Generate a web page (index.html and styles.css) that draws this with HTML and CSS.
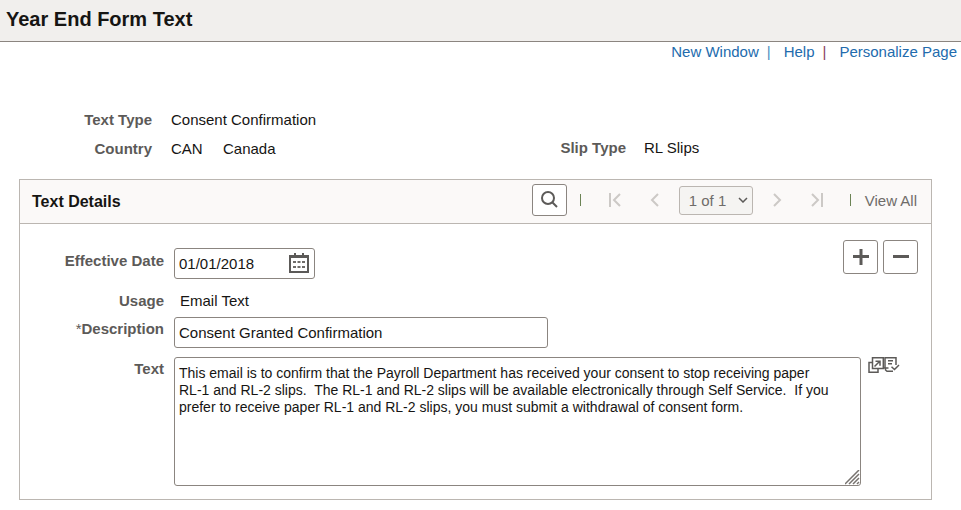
FILE: index.html
```
<!DOCTYPE html>
<html lang="en">
  <head>
    <meta charset="UTF-8" />
    <meta name="viewport" content="width=device-width, initial-scale=1.0" />
    <title>Year End Form Text</title>
    <link rel="stylesheet" href="styles.css">
  </head>
  <body>
    <header class="page-header">
      <h1>Year End Form Text</h1>
    </header>
    <nav class="page-links">
      <a href="#">New Window</a>
      <span class="bar">|</span>
      <a href="#">Help</a>
      <span class="bar bar-dark">|</span>
      <a href="#">Personalize Page</a>
    </nav>

    <main>
      <div class="summary">
        <dl class="summary-list">
          <dt>Text Type</dt>
          <dd>Consent Confirmation</dd>
          <dt>Country</dt>
          <dd><span class="code">CAN</span>Canada</dd>
        </dl>
        <dl class="summary-list slip">
          <dt>Slip Type</dt>
          <dd>RL Slips</dd>
        </dl>
      </div>

      <section class="panel">
        <div class="panel-header">
          <h2>Text Details</h2>
          <div class="pager">
            <button type="button" class="icon-button search" aria-label="Find">
              <svg width="20" height="20" viewBox="0 0 20 20">
                <circle cx="9" cy="8" r="6" />
                <path d="M13 12L18 17" />
              </svg>
            </button>
            <span class="divider"></span>
            <button type="button" class="nav-button" disabled aria-label="First">
              <svg width="12" height="14" viewBox="0 0 12 14">
                <path d="M1 0V14M11 1L5 7L11 13" />
              </svg>
            </button>
            <button type="button" class="nav-button" disabled aria-label="Previous">
              <svg width="12" height="14" viewBox="0 0 12 14">
                <path d="M9 1L3 7L9 13" />
              </svg>
            </button>
            <select class="row-select" aria-label="Row">
              <option>1 of 1</option>
            </select>
            <button type="button" class="nav-button" disabled aria-label="Next">
              <svg width="12" height="14" viewBox="0 0 12 14">
                <path d="M3 1L9 7L3 13" />
              </svg>
            </button>
            <button type="button" class="nav-button" disabled aria-label="Last">
              <svg width="12" height="14" viewBox="0 0 12 14">
                <path d="M1 1L7 7L1 13M11 0V14" />
              </svg>
            </button>
            <span class="divider"></span>
            <button type="button" class="view-all">View All</button>
          </div>
        </div>

        <form class="panel-body">
          <label for="effective-date">Effective Date</label>
          <div class="field date-row">
            <div class="date-box">
              <input type="text" id="effective-date" value="01/01/2018" />
              <button type="button" class="calendar" aria-label="Choose a date">
                <svg width="20" height="20" viewBox="0 0 20 20">
                  <path d="M0 2H20V20H0ZM2 5V18H18V5Z" fill="#5c5a58" fill-rule="evenodd" />
                  <path d="M5 0H7V4H5ZM13 0H15V4H13Z" fill="#5c5a58" />
                  <path d="M4 9H16M4 14H16" stroke="#6f6c69" stroke-width="2" stroke-dasharray="3 1.5" />
                </svg>
              </button>
            </div>
            <div class="row-actions">
              <button type="button" class="icon-button" aria-label="Add a row">
                <svg width="16" height="16" viewBox="0 0 16 16">
                  <path d="M0 7.5H16M8 0V16" />
                </svg>
              </button>
              <button type="button" class="icon-button" aria-label="Delete row">
                <svg width="16" height="16" viewBox="0 0 16 16">
                  <path d="M0 7.5H16" />
                </svg>
              </button>
            </div>
          </div>

          <span class="label">Usage</span>
          <span class="usage">Email Text</span>

          <label for="description"><span class="required">*</span>Description</label>
          <div class="field">
            <input type="text" id="description" class="description" value="Consent Granted Confirmation" />
          </div>

          <label for="text">Text</label>
          <div class="field text-row">
            <textarea id="text">This email is to confirm that the Payroll Department has received your consent to stop receiving paper RL-1 and RL-2 slips.  The RL-1 and RL-2 slips will be available electronically through Self Service.  If you prefer to receive paper RL-1 and RL-2 slips, you must submit a withdrawal of consent form.</textarea>
            <div class="text-tools">
              <button type="button" aria-label="Open in a window">
                <svg width="16" height="17" viewBox="0 0 16 17">
                  <path d="M4.5 0.8H15.3V11.5H4.5ZM4 5.5H1V15.2H10V12" />
                  <path d="M6.5 9.5L11.5 4.5M7.5 4.2H12V8.7" />
                </svg>
              </button>
              <button type="button" aria-label="Spell check">
                <svg width="16" height="17" viewBox="0 0 16 17">
                  <path d="M1 10.5V0.8H12V8M4 3.8H9M4 6.8H8M0 11H4.5M1.5 11V13L3 14.3H9" />
                  <path d="M7.5 9.7L10.5 12.5L15 8" />
                </svg>
              </button>
            </div>
          </div>
        </form>
      </section>
    </main>
  </body>
</html>
```
FILE: styles.css
```
* {
  box-sizing: border-box;
}
body {
  margin: 0;
  background: #fff;
  color: #161513;
  font-family: "Liberation Sans", Arial, sans-serif;
  font-size: 15px;
  line-height: 17px;
}
h1,
h2,
dl,
dd {
  margin: 0;
}
button {
  padding: 0;
  border: none;
  background: none;
  font: inherit;
  cursor: pointer;
}
svg {
  display: block;
  fill: none;
}
.page-header {
  padding: 7px 6px 10px;
  background: #f1efed;
  border-bottom: 1px solid #8b8580;
}
.page-header h1 {
  font-size: 20px;
  line-height: 24px;
}
.page-links {
  display: flex;
  justify-content: flex-end;
  padding: 1px 4px 0 0;
}
.page-links a {
  color: #226bad;
  text-decoration: none;
}
.page-links a:hover {
  text-decoration: underline;
}
.bar {
  padding: 0 13px 0 8px;
  color: #4a8fbf;
}
.bar-dark {
  color: #8a4060;
}
main {
  padding: 51px 29px 10px 19px;
}
.summary {
  display: grid;
  grid-template-columns: 474px 1fr;
  align-items: end;
}
.summary-list {
  display: grid;
  grid-template-columns: 133px 1fr;
  gap: 12px 19px;
}
.slip {
  padding-bottom: 1px;
  column-gap: 18px;
}
dt,
label,
.label {
  color: #5c5a58;
  font-weight: bold;
  text-align: right;
}
.code {
  display: inline-block;
  width: 52px;
}
.panel {
  margin-top: 22px;
  border: 1px solid #bbb6b1;
}
.panel-header {
  display: flex;
  align-items: center;
  justify-content: space-between;
  padding: 4px 14px 7px 12px;
  background: #fbf9f8;
  border-bottom: 1px solid #bbb6b1;
}
.panel-header h2 {
  padding-top: 3px;
  font-size: 16px;
  line-height: 20px;
}
.pager {
  display: flex;
  align-items: center;
}
.icon-button {
  display: flex;
  align-items: center;
  justify-content: center;
  width: 35px;
  height: 34px;
  background: #fff;
  border: 1px solid #8b8580;
  border-radius: 3px;
}
.icon-button svg {
  stroke: #5c5a58;
  stroke-width: 3;
}
.search {
  height: 32px;
}
.search svg {
  stroke-width: 2;
}
.divider {
  width: 1px;
  height: 12px;
  margin: 0 14px 0 13px;
  background: #6b8355;
}
.nav-button {
  display: flex;
  justify-content: center;
  width: 40px;
}
.nav-button svg {
  stroke: #ccc9c6;
  stroke-width: 2;
}
.row-select {
  appearance: none;
  width: 74px;
  height: 29px;
  margin: 0 4px;
  padding: 0 9px;
  background: #f5f4f2 url("data:image/svg+xml,%3Csvg xmlns='http://www.w3.org/2000/svg' width='10' height='6'%3E%3Cpath d='M1 1L5 5L9 1' fill='none' stroke='%235c5a58' stroke-width='1.5'/%3E%3C/svg%3E") no-repeat right 4px center;
  border: 1px solid #bbb6b1;
  border-radius: 3px;
  color: #6f6c69;
  font: inherit;
}
.view-all {
  color: #6f6c69;
}
.panel-body {
  display: grid;
  grid-template-columns: 144px 1fr;
  column-gap: 10px;
  padding: 16px 13px 13px 0;
}
.panel-body label {
  padding-top: 3px;
}
.panel-body label:first-child {
  padding-top: 12px;
}
.panel-body input,
textarea {
  color: #161513;
  font: inherit;
  border: 1px solid #8b8580;
  border-radius: 3px;
}
.field {
  display: flex;
}
.date-row {
  justify-content: space-between;
}
.date-box {
  display: flex;
  align-items: center;
  width: 141px;
  height: 31px;
  margin: 8px 0 13px;
  padding: 0 5px 1px 0;
  border: 1px solid #8b8580;
  border-radius: 3px;
}
.panel-body .date-box input {
  flex: 1;
  min-width: 0;
  padding: 0 4px;
  border: none;
  outline: none;
}
.row-actions {
  display: flex;
  gap: 5px;
}
.usage {
  padding: 0 0 8px 6px;
}
.required {
  font-weight: normal;
}
.description {
  width: 374px;
  height: 31px;
  margin-bottom: 9px;
  padding: 0 4px;
}
.panel-body textarea {
  display: block;
  flex: 1;
  height: 129px;
  padding: 7px 28px 7px 4px;
  font-size: 14px;
}
textarea::-webkit-resizer {
  background: url("data:image/svg+xml,%3Csvg xmlns='http://www.w3.org/2000/svg' width='15' height='15'%3E%3Cpath d='M0 14L14 0M4 14L14 4M8 14L14 8M12 14L14 12' stroke='%2377736f' stroke-width='1.5'/%3E%3C/svg%3E") no-repeat;
}
.text-row {
  padding-right: 18px;
}
.text-tools {
  display: flex;
  align-items: flex-start;
  margin-left: 7px;
}
.text-tools svg {
  stroke: #5c5a58;
  stroke-width: 1.5;
}
```
